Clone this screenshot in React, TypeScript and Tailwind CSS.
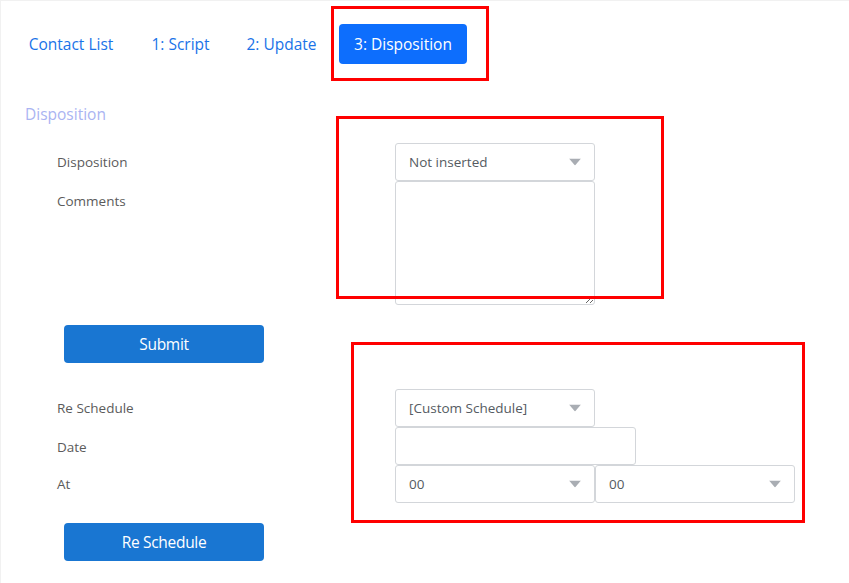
import React from 'react';

const font = { fontFamily: '"Open Sans", "Noto Sans", sans-serif' };

// 드롭다운 화살표
function Caret() {
  return (
    <svg
      className="pointer-events-none absolute right-[14px] top-1/2 -translate-y-1/2"
      width="12"
      height="7"
      viewBox="0 0 12 7"
    >
      <path d="M0 0 L12 0 L6 7 Z" fill="#a9adb3" />
    </svg>
  );
}

function Select({ value, options, className = '' }: { value: string; options: string[]; className?: string }) {
  return (
    <div className={`relative h-[38px] ${className}`}>
      <select
        defaultValue={value}
        className="h-full w-full appearance-none rounded-[3px] border border-[#d3d6da] bg-white pl-[13px] pt-[1px] text-[13.5px] text-[#555b62] outline-none"
      >
        {options.map((o) => (
          <option key={o}>{o}</option>
        ))}
      </select>
      <Caret />
    </div>
  );
}

const hours = Array.from({ length: 24 }, (_, i) => String(i).padStart(2, '0'));
const minutes = ['00', '15', '30', '45'];

export default function App() {
  return (
    <div className="relative min-h-[583px] w-full border-l border-t border-[#f1f1f1] bg-white" style={font}>
      {/* 탭 메뉴 */}
      <nav className="flex gap-2 pl-[12px] pt-[23px] text-[15.5px]">
        <a className="flex h-[40px] w-[116px] items-center justify-center pt-[2px] text-[#1a73e8]">Contact List</a>
        <a className="flex h-[40px] w-[87px] items-center justify-center pt-[2px] text-[#1a73e8]">1: Script</a>
        <a className="flex h-[40px] w-[99px] items-center justify-center pt-[2px] text-[#1a73e8]">2: Update</a>
        <a className="flex h-[40px] w-[128px] items-center justify-center rounded-[4px] bg-[#0d6efd] pt-[2px] text-white">
          3: Disposition
        </a>
      </nav>

      <h2 className="mt-[38px] pl-[24px] text-[15.5px] leading-[24px] text-[#aab4f2]">Disposition</h2>

      {/* 처리 결과 폼 */}
      <div className="mt-[17px] pl-[56px] text-[13.5px] text-[#5b5b5b]">
        <div className="flex">
          <label className="flex h-[37px] w-[338px] items-center pt-[2px]">Disposition</label>
          <Select value="Not inserted" options={['Not inserted', 'Answered', 'No answer', 'Busy']} className="w-[200px]" />
        </div>
        <div className="flex">
          <label className="w-[338px] pt-[10px]">Comments</label>
          <textarea className="h-[124px] w-[200px] rounded-[3px] border border-[#d3d6da] outline-none" />
        </div>
      </div>

      <button className="ml-[63px] mt-[20px] h-[38px] w-[200px] rounded-[4px] bg-[#1976d2] pt-[2px] text-[15.5px] tracking-[-0.3px] text-white">
        Submit
      </button>

      <div className="mt-[26px] pl-[56px] text-[13.5px] text-[#5b5b5b]">
        <div className="flex">
          <label className="flex h-[37px] w-[338px] items-center pt-[2px]">Re Schedule</label>
          <Select
            value="[Custom Schedule]"
            options={['[Custom Schedule]', 'In 1 hour', 'Tomorrow']}
            className="w-[200px]"
          />
        </div>
        <div className="flex">
          <label className="flex h-[38px] w-[338px] items-center pt-[2px]">Date</label>
          <input className="h-[38px] w-[241px] rounded-[3px] border border-[#d3d6da] outline-none" />
        </div>
        <div className="flex">
          <label className="flex h-[37px] w-[338px] items-center pt-[2px]">At</label>
          <Select value="00" options={hours} className="w-[200px]" />
          <Select value="00" options={minutes} className="w-[200px]" />
        </div>
      </div>

      <button className="ml-[63px] mt-[20px] h-[38px] w-[200px] rounded-[4px] bg-[#1976d2] pt-[2px] text-[15.5px] tracking-[-0.3px] text-white">
        Re Schedule
      </button>

      {/* 강조 표시 박스 */}
      <div className="pointer-events-none absolute left-[330px] top-[5px] h-[75px] w-[158px] border-[3px] border-[#ff0000]" />
      <div className="pointer-events-none absolute left-[335px] top-[115px] h-[183px] w-[328px] border-[3px] border-[#ff0000]" />
      <div className="pointer-events-none absolute left-[350px] top-[341px] h-[181px] w-[454px] border-[3px] border-[#ff0000]" />
    </div>
  );
}
